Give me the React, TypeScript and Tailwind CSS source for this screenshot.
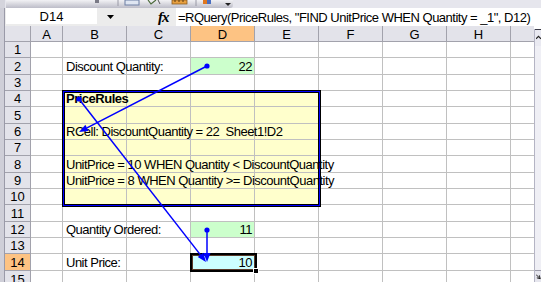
import React from "react";

const COLS = ["A", "B", "C", "D", "E", "F", "G", "H", "I"];
const ROWS = Array.from({ length: 15 }, (_, i) => i + 1);

type CellData = { text: string; bold?: boolean; right?: boolean };

const DATA: Record<string, CellData> = {
  B2: { text: "Discount Quantity:" },
  D2: { text: "22", right: true },
  B4: { text: "PriceRules", bold: true },
  B6: { text: "RCell: DiscountQuantity = 22  Sheet1!D2" },
  B8: { text: "UnitPrice = 10 WHEN Quantity < DiscountQuantity" },
  B9: { text: "UnitPrice = 8 WHEN Quantity >= DiscountQuantity" },
  B12: { text: "Quantity Ordered:" },
  D12: { text: "11", right: true },
  B14: { text: "Unit Price:" },
  D14: { text: "10", right: true },
};

function bgFor(c: string, r: number): string {
  if (c === "D" && (r === 2 || r === 12)) return "bg-[#ccffcc]";
  if (c === "D" && r === 14) return "bg-[#ccffff]";
  if ((c === "B" || c === "C" || c === "D" || c === "E") && r >= 4 && r <= 10) return "bg-[#ffffcc]";
  return "bg-white";
}

const GRID =
  "grid grid-cols-[26px_32px_64px_64px_64px_64px_64px_64px_64px_23px] grid-rows-[16px_16px_17px_16px_16px_17px_16px_16px_17px_16px_16px_17px_16px_16px_17px_17px]";

function Arrow({ x1, y1, x2, y2 }: { x1: number; y1: number; x2: number; y2: number }) {
  const dx = x2 - x1;
  const dy = y2 - y1;
  const len = Math.hypot(dx, dy);
  const ux = dx / len;
  const uy = dy / len;
  const L = 9;
  const W = 3.5;
  const bx = x2 - ux * L;
  const by = y2 - uy * L;
  const pts = `${x2},${y2} ${bx - uy * W},${by + ux * W} ${bx + uy * W},${by - ux * W}`;
  return (
    <g>
      <line x1={x1} y1={y1} x2={bx} y2={by} stroke="#0000ff" strokeWidth={1.5} />
      <polygon points={pts} fill="#0000ff" />
      <circle cx={x1} cy={y1} r={2.6} fill="#0000ff" />
    </g>
  );
}

export default function App() {
  return (
    <div className="relative w-[541px] h-[282px] overflow-hidden bg-white font-['Liberation_Sans',Arial,sans-serif] text-[13px] text-black">
      {/* toolbar remnant */}
      <div className="flex h-[8px] bg-[#e6e6ed]">
        <div className="w-[5px] h-full bg-[#d4d4dc]" />
        <div className="ml-[1px] w-[227px] h-full rounded-br-[3px] bg-linear-to-b from-[#f2f2f5] to-[#bdbdc8]">
          <svg width="227" height="8" viewBox="0 0 227 8">
            <rect x="89" y="0" width="4" height="3" fill="#7a7a86" />
            <line x1="112" y1="0" x2="112" y2="6" stroke="#9a9aa6" />
            <rect x="119" y="0" width="14" height="5" fill="#dfe6f2" stroke="#6d7fa3" strokeWidth="1" />
            <path d="M142 0 L145 4 L150 0" stroke="#4b6a3a" strokeWidth="1.2" fill="none" />
            <path d="M152 0 L154 4" stroke="#555" strokeWidth="1" fill="none" />
            <rect x="166" y="0" width="15" height="4" fill="#e8a040" stroke="#8a5a20" strokeWidth="0.8" />
            <line x1="169" y1="0" x2="169" y2="2" stroke="#5a3a10" />
            <line x1="173" y1="0" x2="173" y2="2" stroke="#5a3a10" />
            <line x1="177" y1="0" x2="177" y2="2" stroke="#5a3a10" />
            <line x1="190" y1="0" x2="190" y2="6" stroke="#9a9aa6" />
            <rect x="197" y="0" width="4" height="4" fill="#e07820" />
            <rect x="201" y="0" width="4" height="4" fill="#4a6fc0" />
            <path d="M219 3 L225 3 L222 6 Z" fill="#222" />
          </svg>
        </div>
        <div className="flex-1" />
      </div>

      {/* formula bar */}
      <div className="flex h-[18px] bg-[#ececec]">
        <div className="w-[5px] h-full bg-[#cfcfd8] border-r border-[#9a9aa8]" />
        <div className="ml-[1px] w-[91px] h-[16px] bg-white flex items-center justify-center leading-[15px]">D14</div>
        <div className="w-[79px] h-full flex items-center">
          <svg width="7" height="4" className="ml-[10px]" viewBox="0 0 7 4">
            <path d="M0 0 L7 0 L3.5 4 Z" fill="#000" />
          </svg>
          <span className="ml-[44px] font-['Liberation_Serif',serif] italic font-bold text-[15px] leading-[14px] tracking-[-1px]">fx</span>
        </div>
        <div className="flex-1 h-full bg-white flex items-center pl-[2px] whitespace-pre tracking-[-0.5px] leading-[15px]">
          =RQuery(PriceRules, "FIND UnitPrice WHEN Quantity = _1", D12)
        </div>
      </div>

      {/* sheet */}
      <div className="flex">
        <div className="w-[5px] h-[256px] bg-[#cfcfd8] border-r border-[#9a9aa8]" />
        <div className="grid">
          <div className={`${GRID} col-start-1 row-start-1`}>
            {/* header row */}
            <div className="bg-[#e3e3ea] border-r border-b border-[#a2a2ac]" />
            {COLS.map((c) => (
              <div
                key={c}
                className={`flex items-start justify-center pt-[2px] leading-[13px] border-b border-[#a2a2ac] ${
                  c === "I" ? "" : "border-r"
                } ${c === "D" ? "bg-[#fdc383]" : "bg-[#e3e3ea]"}`}
              >
                {c === "I" ? "" : c}
              </div>
            ))}
            {ROWS.map((r) => (
              <React.Fragment key={r}>
                <div
                  className={`flex items-end justify-center leading-[15px] border-r border-b border-[#a2a2ac] ${
                    r === 14 ? "bg-[#fdc383]" : "bg-[#e3e3ea]"
                  }`}
                >
                  {r}
                </div>
                {COLS.map((c) => {
                  const d = DATA[`${c}${r}`];
                  return (
                    <div
                      key={c}
                      className={`flex items-end border-b border-[#c0c0c0] ${c === "I" ? "" : "border-r"} ${bgFor(c, r)} ${
                        d && d.right ? "justify-end pr-[2px]" : "pl-[3px]"
                      }`}
                    >
                      {d && (
                        <span
                          className={`relative z-10 whitespace-pre leading-[15px] tracking-[-0.5px] ${
                            d.bold ? "font-bold" : ""
                          }`}
                        >
                          {d.text}
                        </span>
                      )}
                    </div>
                  );
                })}
              </React.Fragment>
            ))}
          </div>

          {/* overlays */}
          <div className={`${GRID} col-start-1 row-start-1 pointer-events-none`}>
            <div className="col-start-3 col-span-4 row-start-5 row-span-7 -ml-px -mt-px -mr-[2px] -mb-[2px] border border-black">
              <div className="h-full border border-[#0000ff]">
                <div className="h-full border border-black" />
              </div>
            </div>
            <div className="relative col-start-5 row-start-15 -ml-px -mt-px -mr-[2px] -mb-px border-2 border-black">
              <div className="h-full border border-[#5a3a2a]" />
              <div className="absolute -right-[4px] -bottom-[4px] w-[6px] h-[6px] bg-black border border-white" />
            </div>
          </div>
        </div>

        {/* vertical scrollbar */}
        <div className="w-[7px] mt-[3px] h-[253px] flex flex-col border-l border-[#b4b4c4] bg-[#efeff5]">
          <div className="h-[17px] border-t border-[#3c3c48] bg-[#e9e9f1] flex items-start pt-[5px] pl-[1px]">
            <svg width="6" height="5" viewBox="0 0 6 5">
              <path d="M0 4 L3 1 L6 4" stroke="#222" strokeWidth="1.4" fill="none" />
            </svg>
          </div>
          <div className="flex-1" />
          <div className="h-[12px] border-t border-[#9a9aa8] bg-[#e6e6ee] flex items-start pt-[3px] pl-[1px]">
            <svg width="6" height="6" viewBox="0 0 6 6">
              <path d="M0 0 L5 5 M1 4 L5 5 L4 1" stroke="#222" strokeWidth="1.2" fill="none" />
            </svg>
          </div>
        </div>
      </div>

      {/* trace arrows */}
      <svg className="absolute left-0 top-0 z-20 pointer-events-none" width={541} height={282}>
        <Arrow x1={207} y1={66} x2={79} y2={132} />
        <Arrow x1={79} y1={99} x2={206} y2={262} />
        <Arrow x1={207} y1={230} x2={207} y2={262} />
      </svg>
    </div>
  );
}
